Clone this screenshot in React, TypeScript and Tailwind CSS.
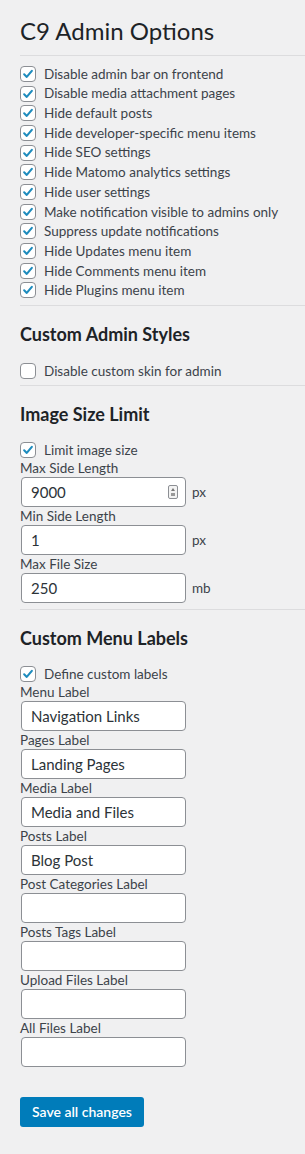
import type { ReactNode } from "react";

const general = [
  "Disable admin bar on frontend",
  "Disable media attachment pages",
  "Hide default posts",
  "Hide developer-specific menu items",
  "Hide SEO settings",
  "Hide Matomo analytics settings",
  "Hide user settings",
  "Make notification visible to admins only",
  "Suppress update notifications",
  "Hide Updates menu item",
  "Hide Comments menu item",
  "Hide Plugins menu item",
];

const menuLabels = [
  { label: "Menu Label", value: "Navigation Links" },
  { label: "Pages Label", value: "Landing Pages" },
  { label: "Media Label", value: "Media and Files" },
  { label: "Posts Label", value: "Blog Post" },
  { label: "Post Categories Label", value: "" },
  { label: "Posts Tags Label", value: "" },
  { label: "Upload Files Label", value: "" },
  { label: "All Files Label", value: "" },
];

function Box({ checked }: { checked: boolean }) {
  return (
    <span className="w-4 h-4 shrink-0 bg-white border border-[#8c8f94] rounded-[4px] flex items-center justify-center">
      {checked && (
        <svg viewBox="0 0 16 16" className="w-[14px] h-[14px]">
          <path d="M3.6 8.4 L6.6 11.3 L12.4 4.4" fill="none" stroke="#1e8cbe" strokeWidth="2.4" strokeLinecap="round" strokeLinejoin="round" />
        </svg>
      )}
    </span>
  );
}

function Check({ text, checked = true, h = "h-[19.7px]" }: { text: string; checked?: boolean; h?: string }) {
  return (
    <div className={`flex items-center gap-2 ${h}`}>
      <Box checked={checked} />
      <span className="text-[13.5px] text-[#3c434a]">{text}</span>
    </div>
  );
}

function Field({ label, value, unit, spin }: { label: string; value: string; unit?: string; spin?: boolean }) {
  return (
    <div>
      <div className="h-[18px] flex items-center text-[13.5px] text-[#3c434a]">{label}</div>
      <div className="flex items-center h-[30px]">
        <div className="ml-px w-[165px] h-[30px] bg-white border border-[#8c8f94] rounded-[4px] flex items-center justify-between pl-[9px] pr-[7px] text-[15px] text-[#2c3338]">
          <span>{value}</span>
          {spin && (
            <svg viewBox="0 0 10 14" className="w-[10px] h-[14px]">
              <rect x="0.5" y="0.5" width="9" height="13" rx="1.5" fill="#f3f3f3" stroke="#8c8f94" />
              <path d="M5 3 L7 6 L3 6 Z" fill="#777" />
              <rect x="3" y="8" width="4" height="3" fill="#999" />
            </svg>
          )}
        </div>
        {unit && <span className="ml-[6px] text-[13.5px] text-[#3c434a]">{unit}</span>}
      </div>
    </div>
  );
}

function Section({ title, children }: { title: string; children: ReactNode }) {
  return (
    <div>
      <h2 className="pt-[16px] h-[40px] leading-[24px] text-[18px] font-bold text-[#1d2327]">{title}</h2>
      <div className="pt-[15px]">{children}</div>
    </div>
  );
}

function Rule() {
  return <div className="h-px bg-[#dcdcde]" />;
}

export default function App() {
  return (
    <div className="min-h-[1154px] bg-[#f0f0f1] pl-5 pt-[16px] font-['Lato',sans-serif]">
      <h1 className="text-[24px] leading-[30px] text-[#1d2327] mb-[9px]">C9 Admin Options</h1>
      <Rule />
      <div className="pt-[8px] pb-[5px]">
        {general.map((t) => (
          <Check key={t} text={t} />
        ))}
      </div>
      <Rule />
      <Section title="Custom Admin Styles">
        <div className="pb-[4px]">
          <Check text="Disable custom skin for admin" checked={false} />
        </div>
      </Section>
      <Rule />
      <Section title="Image Size Limit">
        <div className="pb-[6px]">
          <Check text="Limit image size" h="h-[18px]" />
          <Field label="Max Side Length" value="9000" unit="px" spin />
          <Field label="Min Side Length" value="1" unit="px" />
          <Field label="Max File Size" value="250" unit="mb" />
        </div>
      </Section>
      <Rule />
      <Section title="Custom Menu Labels">
        <Check text="Define custom labels" h="h-[18px]" />
        {menuLabels.map((f) => (
          <Field key={f.label} label={f.label} value={f.value} />
        ))}
      </Section>
      <button className="mt-[30px] h-[30px] px-3 bg-[#007cba] text-white text-[14px] font-semibold rounded-[3px]">
        Save all changes
      </button>
    </div>
  );
}
